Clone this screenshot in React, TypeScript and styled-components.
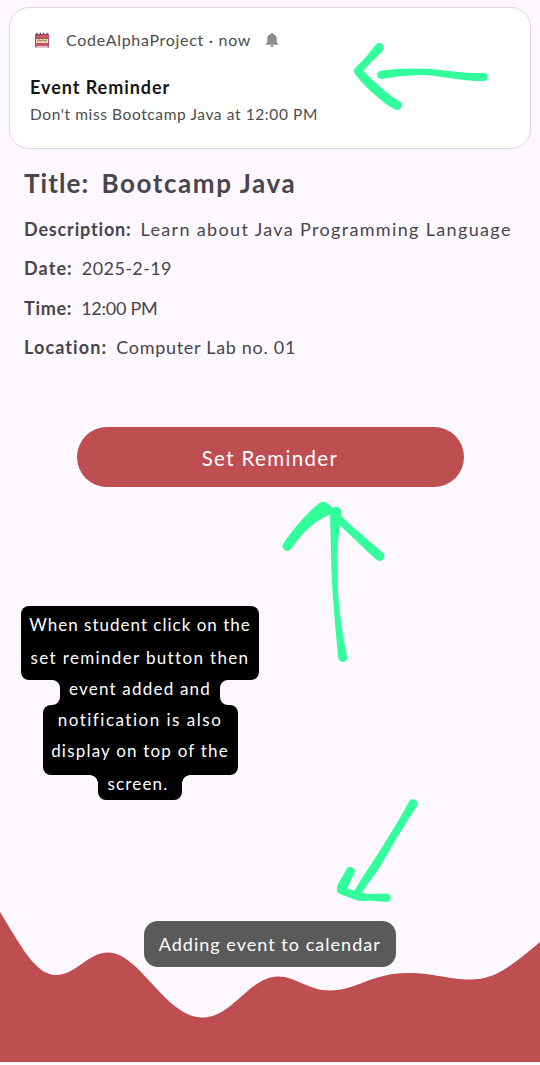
import React from "react";
import styled, { createGlobalStyle } from "styled-components";

const PAGE = "#fdf7ff";
const RED = "#be4e50";
const GREEN = "#32ff9b";

const GlobalStyle = createGlobalStyle`
  * { box-sizing: border-box; }
  body {
    margin: 0;
    background: #fff;
    font-family: Lato, "Open Sans", sans-serif;
  }
`;

const Screen = styled.main`
  position: relative;
  display: flex;
  flex-direction: column;
  width: 540px;
  height: 1065px;
  padding-bottom: 3px;
  overflow: hidden;
  background: linear-gradient(${PAGE} 1062px, #fff 1062px);
`;

const Text = styled.span<{ $size: number; $spacing?: number; $bold?: boolean }>`
  margin: 0;
  font-size: ${(p) => p.$size}px;
  letter-spacing: ${(p) => p.$spacing ?? 0}px;
  font-weight: ${(p) => (p.$bold ? 700 : 400)};
  white-space: nowrap;
`;

const Notification = styled.section`
  height: 142px;
  margin: 7px 9px 0;
  padding: 21px 20px;
  border: 1px solid #dcd8de;
  border-radius: 20px;
  background: #fff;
  color: #4c4c4c;
`;

const NotificationHeader = styled.header`
  display: flex;
  align-items: center;
  height: 21px;
  padding-left: 4px;
`;

const AppName = styled(Text)`
  width: 200px;
  margin-left: 16px;
`;

const NotificationTitle = styled(Text)`
  display: block;
  margin-top: 25px;
  line-height: 24px;
  color: #151515;
`;

const NotificationBody = styled(Text)`
  display: block;
  margin-top: 3px;
  line-height: 24px;
`;

const Details = styled.dl`
  display: flex;
  flex-direction: column;
  margin: 14px 0 0 24px;
  color: #49454c;
`;

const Row = styled.div<{ $title?: boolean }>`
  display: flex;
  align-items: center;
  gap: ${(p) => (p.$title ? 12 : 9)}px;
  height: ${(p) => (p.$title ? 40 : 39.5)}px;
  margin-bottom: ${(p) => (p.$title ? 6 : 0)}px;
`;

const ReminderButton = styled.button`
  flex: none;
  width: 387px;
  height: 60px;
  margin: 59.5px 0 0 76.5px;
  padding: 2px 0 0;
  border: 0;
  border-radius: 30px;
  background: ${RED};
  color: #fff;
  font-family: inherit;
`;

const Callout = styled.aside`
  display: flex;
  flex-direction: column;
  align-items: center;
  width: 238px;
  margin: 119.5px 0 0 21px;
  color: #fff;
`;

const CalloutBlock = styled.div<{ $width: number; $height: number; $line: number; $top?: number }>`
  display: flex;
  flex-direction: column;
  align-items: center;
  width: ${(p) => p.$width}px;
  height: ${(p) => p.$height}px;
  padding-top: ${(p) => p.$top ?? 0}px;
  border-radius: 8px;
  background: #000;
  line-height: ${(p) => p.$line}px;
`;

const CalloutNeck = styled.div`
  display: flex;
  justify-content: space-between;
  width: 178px;
  height: 25px;
  background: #000;
  line-height: 17px;
  &::before,
  &::after {
    content: "";
    width: 9px;
    height: 25px;
    background: ${PAGE};
    border-radius: 0 8px 8px 0;
  }
  &::after {
    border-radius: 8px 0 0 8px;
  }
`;

const CalloutFoot = styled.div`
  display: flex;
  width: 100px;
  height: 25px;
  &::before,
  &::after {
    content: "";
    width: 8px;
    height: 8px;
    background: radial-gradient(circle at 0 100%, transparent 7.5px, #000 8px);
  }
  &::after {
    background: radial-gradient(circle at 100% 100%, transparent 7.5px, #000 8px);
  }
`;

const FootBody = styled.div`
  width: 84px;
  height: 25px;
  padding-right: 4px;
  border-radius: 0 0 8px 8px;
  background: #000;
  text-align: center;
  line-height: 17px;
`;

const Wave = styled.svg`
  flex: none;
  display: block;
  margin-top: auto;
`;

const Toast = styled.div`
  position: absolute;
  left: 143.5px;
  top: 921px;
  display: flex;
  align-items: center;
  justify-content: center;
  width: 252.5px;
  height: 45.5px;
  padding-top: 1px;
  border-radius: 14px;
  background: #5a5a5a;
  color: #fff;
`;

const Mark = styled.svg<{ $x: number; $y: number }>`
  position: absolute;
  left: ${(p) => p.$x}px;
  top: ${(p) => p.$y}px;
  fill: ${GREEN};
`;

function Arrow({ x, y, w, h, paths }: { x: number; y: number; w: number; h: number; paths: string[] }) {
  return (
    <Mark $x={x} $y={y} width={w} height={h} viewBox={`${x} ${y} ${w} ${h}`} aria-hidden>
      {paths.map((d) => (
        <path key={d} d={d} />
      ))}
    </Mark>
  );
}

const CalendarIcon = () => (
  <svg width="16" height="16" viewBox="0 0 16 16" aria-hidden>
    <rect x="1" y="2" width="14" height="13.4" fill="#a05262" />
    <rect x="1.5" y="2.6" width="13" height="3.4" fill="#d9566f" />
    <rect x="2" y="6.4" width="12" height="4.6" fill="#ecd9b4" />
    <path d="M2 6.3h12" stroke="#6e3c48" strokeWidth=".8" />
    <path d="M3 9.2l2-1.4 2 1.4 2-1.4 2 1.4 2-1.4" stroke="#8a7358" fill="none" />
    <rect x="1.8" y="11.4" width="12.4" height="2.4" fill="#cf5369" />
    <rect x="2.4" y="14.2" width="11.2" height="1.2" fill="#f0dfe0" />
    <path d="M3 .8v2.6M6.3 .8v2.6M9.6 .8v2.6M13 .8v2.6" stroke="#53445c" strokeWidth="1.3" />
  </svg>
);

const BellIcon = () => (
  <svg width="12" height="14" viewBox="0 0 12 14" fill="#8d8d8d" aria-hidden>
    <path d="M6 0C6.8 0 7.2.5 7.2 1C9.6 1.6 10.7 3.3 10.7 5.4V9L12 10.7V11.8H0V10.7L1.3 9V5.4C1.3 3.3 2.4 1.6 4.8 1C4.8.5 5.2 0 6 0ZM4.4 12.2H7.6C7.6 13.3 6.9 14 6 14S4.4 13.3 4.4 12.2Z" />
  </svg>
);

const details = [
  { label: "Description:", value: "Learn about Java Programming Language", labelSpacing: 0.83, valueSpacing: 1.34 },
  { label: "Date:", value: "2025-2-19", labelSpacing: 1.1, valueSpacing: 0.4 },
  { label: "Time:", value: "12:00 PM", labelSpacing: 0.7, valueSpacing: -0.25 },
  { label: "Location:", value: "Computer Lab no. 01", labelSpacing: 1.1, valueSpacing: 0.7 },
];

export default function App() {
  return (
    <>
      <GlobalStyle />
      <Screen>
        <Notification>
          <NotificationHeader>
            <CalendarIcon />
            <AppName $size={16} $spacing={0.7}>CodeAlphaProject · now</AppName>
            <BellIcon />
          </NotificationHeader>
          <NotificationTitle $size={18} $spacing={0.95} $bold>Event Reminder</NotificationTitle>
          <NotificationBody $size={15.5} $spacing={0.6}>Don't miss Bootcamp Java at 12:00 PM</NotificationBody>
        </Notification>

        <Details>
          <Row $title>
            <Text as="dt" $size={26} $spacing={1.1} $bold>Title:</Text>
            <Text as="dd" $size={26} $spacing={1.6} $bold>Bootcamp Java</Text>
          </Row>
          {details.map((d) => (
            <Row key={d.label}>
              <Text as="dt" $size={18} $spacing={d.labelSpacing} $bold>{d.label}</Text>
              <Text as="dd" $size={18} $spacing={d.valueSpacing}>{d.value}</Text>
            </Row>
          ))}
        </Details>

        <ReminderButton>
          <Text $size={20.5} $spacing={1.35}>Set Reminder</Text>
        </ReminderButton>

        <Callout>
          <CalloutBlock $width={238} $height={74} $line={33} $top={2}>
            <Text $size={17} $spacing={1}>When student click on the</Text>
            <Text $size={17} $spacing={1.35}>set reminder button then</Text>
          </CalloutBlock>
          <CalloutNeck>
            <Text $size={17} $spacing={1.2}>event added and</Text>
          </CalloutNeck>
          <CalloutBlock $width={195} $height={70} $line={30.5}>
            <Text $size={17} $spacing={1.5}>notification is also</Text>
            <Text $size={17} $spacing={1.2}>display on top of the</Text>
          </CalloutBlock>
          <CalloutFoot>
            <FootBody>
              <Text $size={17} $spacing={1.15}>screen.</Text>
            </FootBody>
          </CalloutFoot>
        </Callout>

        <Wave width="540" height="150" viewBox="0 0 540 150" aria-hidden>
          <path
            fill={RED}
            d="M0 0C20 32 35 63 56 63C76 63 88 40.5 108 40.5C140 40.5 165 105.5 203 105.5C232 105.5 250 64.5 278 64.5C296 64.5 308 78.5 330 78.5C356 78.5 372 61 408 61C434 61 448 67.5 470 67.5C493 67.5 507 58 540 30V150H0Z"
          />
        </Wave>

        <Toast>
          <Text $size={18} $spacing={1.03}>Adding event to calendar</Text>
        </Toast>

        <Arrow
          x={350} y={40} w={140} h={72}
          paths={[
            "M380.5 70.7Q400 68 420 68.7C440 68 450 73 484 73A4 4 0 0 1 483 81C455 81 440 75 420 75Q400 75.5 382 79A4.2 4.2 0 0 1 380.5 70.7Z",
            "M375.5 45A4.5 4.5 0 0 1 383 50C378 57 370 62 363.5 71C373 81 387 94 400 101.5A4.8 4.8 0 0 1 394 109C380 101 363 85 355 74Q352.5 70 356 67C364 60 369 53 375.5 45Z",
          ]}
        />
        <Arrow
          x={278} y={498} w={110} h={168}
          paths={[
            "M283 544C294 528 306 514 318 504Q323 499.5 328 504L333 508A5 5 0 0 1 341 510C342 525 337 535 337 560C337 600 341 625 347 656A4.3 4.3 0 0 1 338.5 659C335 625 331 580 331 550L330 514.5C309 524 303 534 290 550A4.8 4.8 0 0 1 283 544Z",
            "M339 514C351 526 366 538 382.5 552.5A4.6 4.6 0 0 1 377 560C364 549 350 534 337 523Z",
          ]}
        />
        <Arrow
          x={333} y={796} w={90} h={110}
          paths={[
            "M409 801.5A4.5 4.5 0 0 1 417 806C408 820 398 835 388 853S372 878 363 891L357 899L353 893C360 880 373 862 384 844S401 817 409 801.5Z",
            "M346.5 869A4.5 4.5 0 0 1 354.5 873L347 888.5Q357 892 368 894L387 893.5A4.3 4.3 0 0 1 387 902L368 900.5Q360 902 353 899L340 894Q336 892 337 887C339 881 343 876 346.5 869Z",
          ]}
        />
      </Screen>
    </>
  );
}
